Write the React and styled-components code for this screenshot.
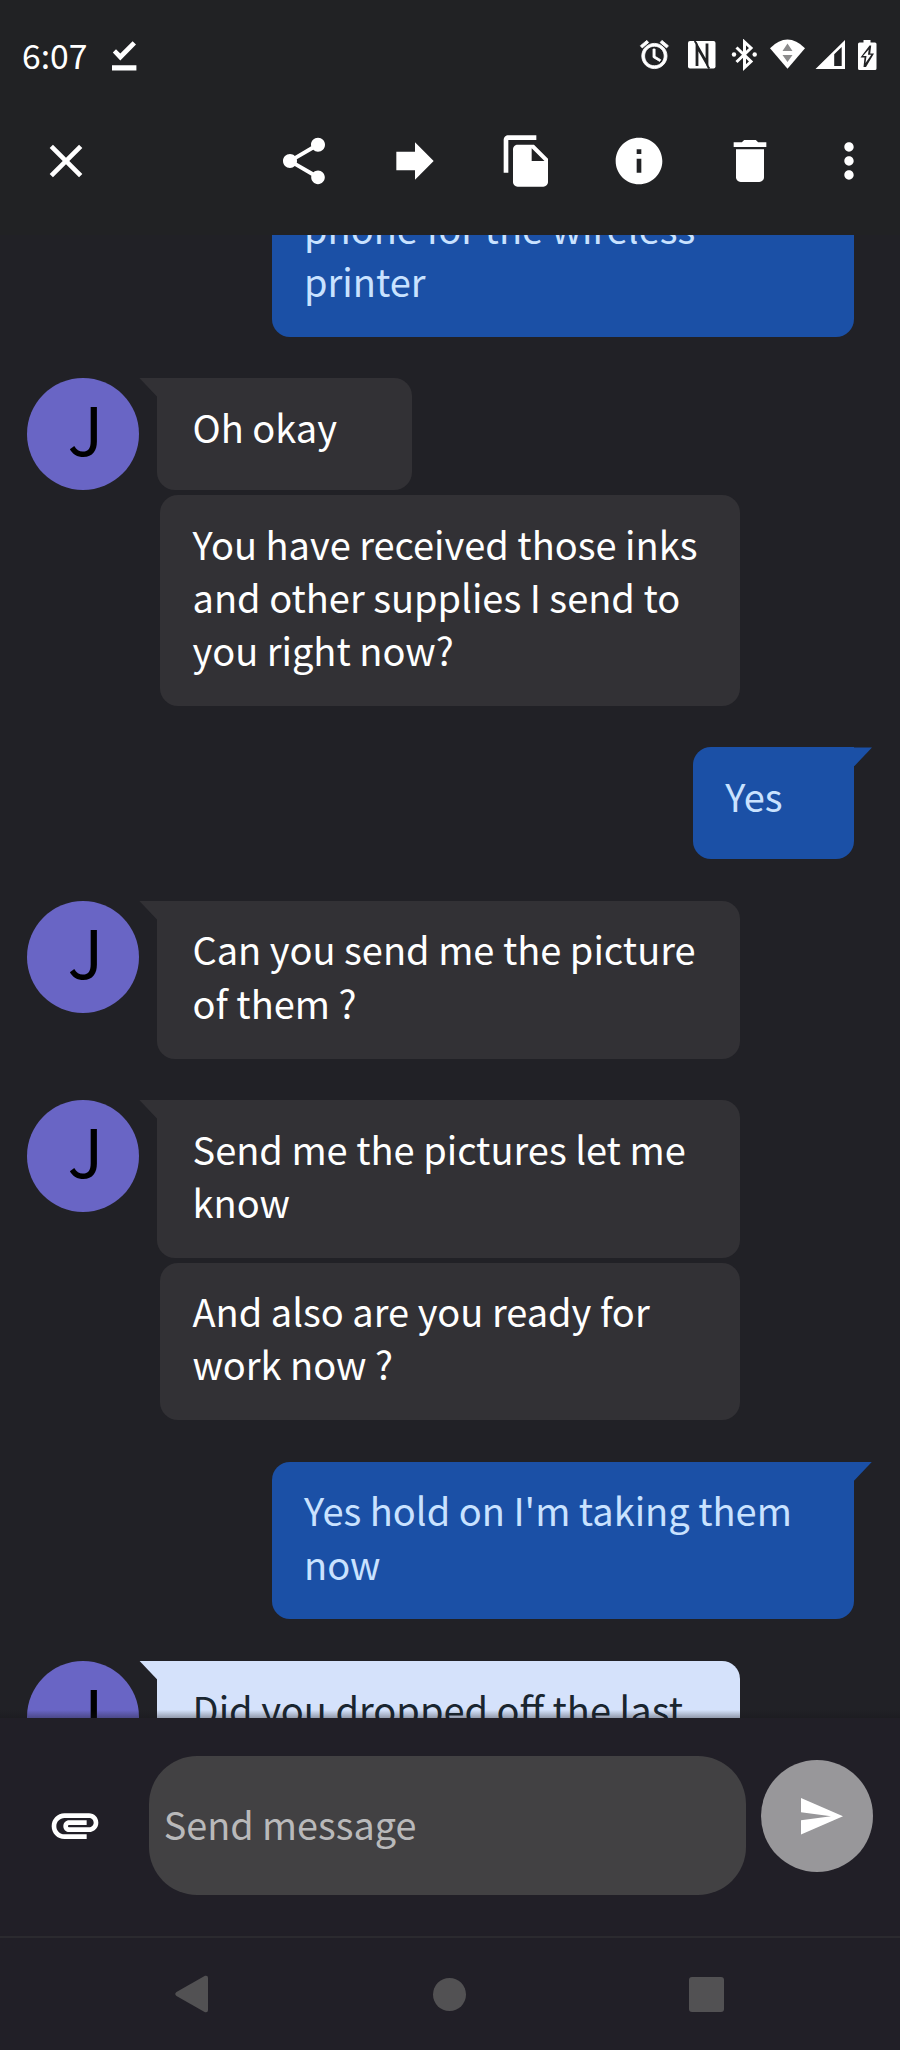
import React from "react";
import styled, { createGlobalStyle } from "styled-components";

const messages = [
    { id: 1, from: "me", bubbles: ["phone for the wireless\nprinter"] },
    { id: 2, from: "J", bubbles: ["Oh okay", "You have received those inks\nand other supplies I send to\nyou right now?"] },
    { id: 3, from: "me", bubbles: ["Yes"] },
    { id: 4, from: "J", bubbles: ["Can you send me the picture\nof them ?"] },
    { id: 5, from: "J", bubbles: ["Send me the pictures let me\nknow", "And also are you ready for\nwork now ?"] },
    { id: 6, from: "me", bubbles: ["Yes hold on I'm taking them\nnow"] },
    { id: 7, from: "J", selected: true, bubbles: ["Did you dropped off the last\n"] },
];

function Icon({ d, size = 56 }) {
    return (
        <svg width={size} height={size} viewBox="0 0 24 24" fill="currentColor">
            <path d={d} />
        </svg>
    );
}

function StatusBar() {
    return (
        <ContainerStatus>
            <Clock>6:07</Clock>
            <svg width="25" height="30" viewBox="0 0 25 30" fill="#fff">
                <path d="M0.8 11.6 4 8.2 8.3 12.4 20.6 0.2 24 3.6 8.3 19.4zM0 24.2h24.4v5.2H0z" />
            </svg>
            <StatusIcons>
                <svg width="240" height="34" viewBox="0 0 240 34" fill="#fff">
                    {/* alarm */}
                    <path
                        transform="translate(-1.4 -1.2) scale(1.4)"
                        stroke="#fff"
                        strokeWidth="0.6"
                        d="M22 5.72l-4.6-3.86-1.29 1.53 4.6 3.86L22 5.72zM7.88 3.39L6.6 1.86 2 5.71l1.29 1.53 4.59-3.85zM12.5 8H11v6l4.75 2.85.75-1.23-4-2.37V8zM12 4c-4.97 0-9 4.03-9 9s4.02 9 9 9c4.97 0 9-4.03 9-9s-4.03-9-9-9zm0 16c-3.87 0-7-3.13-7-7s3.13-7 7-7 7 3.13 7 7-3.13 7-7 7z"
                    />
                    {/* nfc */}
                    <rect x="49" y="2" width="27.5" height="27.5" rx="2" />
                    <path d="M58 27V7L68 24.500V4.500" fill="none" stroke="#212224" strokeWidth="2.800" />
                    <path d="M55.500 2Q57.500 3.500 58.500 8M70.500 29.500Q68.500 28 67.500 23.500" fill="none" stroke="#212224" strokeWidth="1.800" />
                    {/* bluetooth */}
                    <path d="M97.500 8.500l14.500 14-6.500 6V3l6.500 6-14.500 14" fill="none" stroke="#fff" strokeWidth="3" />
                    <circle cx="95" cy="15.500" r="2.200" />
                    <circle cx="115.700" cy="15.500" r="2.200" />
                    {/* wifi */}
                    <path d="M131 9.200Q148.500-8 166 9.200L148.500 29.700z" />
                    <path d="M148.500 4.500l5 7.500h-10zM143.500 16h10l-5 7z" fill="#8b8b8c" />
                    {/* signal */}
                    <path fillRule="evenodd" d="M176.500 30 206 1v29zM195.200 15.200V27h7.500V8z" />
                    {/* battery */}
                    <path fillRule="evenodd" d="M224.500 1h7v2.500h4.500a1.500 1.500 0 0 1 1.500 1.500v24.500a1.500 1.500 0 0 1-1.500 1.500h-15.500a1.500 1.500 0 0 1-1.500-1.500V5a1.500 1.500 0 0 1 1.500-1.500h4zM230.500 6.500 221.500 18.500h4l-1 9.500h2.500l8-13.500h-3.800l1-8z" />
                    <path d="M229.700 10.500 224 17h3.500l-1 7 5.800-8.200h-3.300z" />
                </svg>
            </StatusIcons>
        </ContainerStatus>
    );
}

function Toolbar() {
    return (
        <ContainerToolbar>
            <Icon d="M19 6.410L17.590 5 12 10.590 6.410 5 5 6.410 10.590 12 5 17.590 6.410 19 12 13.410 17.590 19 19 17.590 13.410 12z" />
            <Actions>
                <Icon d="M18 16.080c-.76 0-1.440.3-1.960.77L8.910 12.700c.05-.23.09-.46.09-.7s-.04-.47-.09-.7l7.050-4.110c.54.5 1.250.81 2.040.81 1.660 0 3-1.340 3-3s-1.340-3-3-3-3 1.340-3 3c0 .24.04.47.09.7L8.040 9.810C7.500 9.310 6.790 9 6 9c-1.660 0-3 1.340-3 3s1.340 3 3 3c.79 0 1.500-.31 2.040-.81l7.120 4.160c-.05.21-.08.43-.08.65 0 1.610 1.310 2.920 2.920 2.920s2.920-1.310 2.920-2.920-1.310-2.920-2.920-2.920z" />
                <Icon d="M12 8V4l8 8-8 8v-4H4V8z" />
                <Icon d="M16 1H4c-1.100 0-2 .9-2 2v14h2V3h12V1zm-1 4l6 6v10c0 1.100-.9 2-2 2H7.990C6.890 23 6 22.100 6 21l.01-14c0-1.100.89-2 1.990-2h7zm-1 7h5.500L14 6.500V12z" />
                <Icon d="M12 2C6.480 2 2 6.480 2 12s4.480 10 10 10 10-4.480 10-10S17.520 2 12 2zm1 15h-2v-6h2v6zm0-8h-2V7h2v2z" />
                <Icon d="M6 19c0 1.100.9 2 2 2h8c1.100 0 2-.9 2-2V7H6v12zM19 4h-3.500l-1-1h-5l-1 1H5v2h14V4z" />
            </Actions>
            <Icon d="M12 8c1.100 0 2-.9 2-2s-.9-2-2-2-2 .9-2 2 .9 2 2 2zm0 2c-1.100 0-2 .9-2 2s.9 2 2 2 2-.9 2-2-.9-2-2-2zm0 6c-1.100 0-2 .9-2 2s.9 2 2 2 2-.9 2-2-.9-2-2-2z" />
        </ContainerToolbar>
    );
}

function Group({ from, bubbles, selected }) {
    const mine = from === "me";
    return (
        <Row $mine={mine}>
            {!mine && <Avatar>{from}</Avatar>}
            <Bubbles $mine={mine}>
                {bubbles.map((text, i) => (
                    <Bubble
                        key={i}
                        $mine={mine}
                        $selected={selected}
                        $tail={i === 0}
                        $wide={text.includes("\n")}
                    >
                        {text}
                    </Bubble>
                ))}
            </Bubbles>
        </Row>
    );
}

function Compose() {
    return (
        <ContainerCompose>
            <Attach>
                <Icon d="M2 12.500C2 9.460 4.460 7 7.500 7H18c2.210 0 4 1.790 4 4s-1.790 4-4 4H9.500C8.120 15 7 13.880 7 12.500S8.120 10 9.500 10H17v2H9.410c-.55 0-.55 1 0 1H18c1.100 0 2-.9 2-2s-.9-2-2-2H7.500C5.570 9 4 10.570 4 12.500S5.570 16 7.500 16H17v2H7.500C4.460 18 2 15.540 2 12.500z" />
            </Attach>
            <Field>Send message</Field>
            <SendButton>
                <svg width="42" height="37" viewBox="0 0 42 37" fill="#fff">
                    <path d="M0 0 42 18.300 0 36.500V22.200L30 18.300 0 14.200z" />
                </svg>
            </SendButton>
        </ContainerCompose>
    );
}

function NavBar() {
    return (
        <ContainerNav>
            <svg width="34" height="38" viewBox="0 0 34 38" fill="#525153">
                <path d="M1.500 17 30 .8Q33 0 33 3v32q0 3-3 2.200L1.500 21Q-1 19 1.500 17z" />
            </svg>
            <Home />
            <Recents />
        </ContainerNav>
    );
}

export default function App() {
    return (
        <>
            <GlobalStyle />
            <Screen>
                <StatusBar />
                <Toolbar />
                <Chat>
                    {messages.map((m) => (
                        <Group key={m.id} {...m} />
                    ))}
                </Chat>
                <Compose />
                <NavBar />
            </Screen>
        </>
    );
}

const GlobalStyle = createGlobalStyle`
    * {
        box-sizing: border-box;
    }

    body {
        margin: 0;
        background: #212126;
        font-family: 'Noto Sans CJK SC', 'Noto Sans', sans-serif;
    }

    svg {
        display: block;
        flex-shrink: 0;
    }
`

const Screen = styled.div`
    width: 900px;
    height: 2050px;
    display: flex;
    flex-direction: column;
    overflow: hidden;
    background: #212126;
    color: #fff;
`

const ContainerStatus = styled.div`
    height: 112px;
    padding: 0 21px 0 22px;
    display: flex;
    align-items: center;
    background: #212224;
`

const Clock = styled.span`
    width: 90px;
    margin-top: -3px;
    font-size: 33.700px;
    line-height: 40px;
`

const StatusIcons = styled.div`
    margin-left: auto;
`

const ContainerToolbar = styled.div`
    height: 123px;
    padding: 21px 23.300px 46px 37.600px;
    display: flex;
    justify-content: space-between;
    background: #212224;
`

const Actions = styled.div`
    display: flex;
    gap: 55.700px;
    margin-left: auto;
    margin-right: 42.400px;
`

const Chat = styled.div`
    position: relative;
    height: 1483px;
    flex-shrink: 0;
    overflow: hidden;
    display: flex;
    flex-direction: column;
    gap: 41.500px;

    /* shadow of the compose bar over the last message */
    &::after {
        content: "";
        position: absolute;
        left: 0;
        right: 0;
        bottom: 0;
        height: 8px;
        background: linear-gradient(rgba(20, 20, 24, 0), rgba(20, 20, 24, 0.35));
    }
`

const Row = styled.div`
    display: flex;
    flex-shrink: 0;
    padding: 0 46px 0 27.400px;
    justify-content: ${(p) => (p.$mine ? "flex-end" : "flex-start")};

    &:first-child {
        margin-top: -56px;
    }
`

const Avatar = styled.div`
    width: 112px;
    height: 112px;
    flex-shrink: 0;
    margin-right: 18px;
    padding-left: 4px;
    border-radius: 50%;
    background: #6965c5;
    color: #000;
    font-size: 67px;
    line-height: 98px;
    text-align: center;
`

const Bubbles = styled.div`
    display: flex;
    flex-direction: column;
    gap: 5px;
    align-items: ${(p) => (p.$mine ? "flex-end" : "flex-start")};
`

const Bubble = styled.div`
    position: relative;
    width: ${(p) => (!p.$wide ? "auto" : p.$mine ? "582px" : p.$tail ? "582.6px" : "580px")};
    min-height: 112px;
    margin-left: ${(p) => (p.$mine || p.$tail ? 0 : 2.6)}px;
    padding: 21.500px ${(p) => (p.$wide ? 0 : p.$mine ? 71.5 : 74.5)}px 29.500px ${(p) => (p.$mine ? 32 : p.$tail ? 35.1 : 32.5)}px;
    border-radius: 18px;
    font-size: 38px;
    line-height: 53.300px;
    white-space: pre;
    background: ${(p) => (p.$selected ? "#d5e2fb" : p.$mine ? "#1b50a6" : "#323135")};
    color: ${(p) => (p.$selected ? "#1a2630" : p.$mine ? "#c9e2ff" : "#fff")};
    ${(p) => p.$tail && (p.$mine ? "border-top-right-radius: 0;" : "border-top-left-radius: 0;")}

    &::before {
        content: "";
        display: ${(p) => (p.$tail ? "block" : "none")};
        position: absolute;
        top: 0;
        width: 18px;
        height: 19px;
        background: inherit;
        ${(p) => (p.$mine
            ? "left: 100%; clip-path: polygon(0 0, 100% 0, 0 100%);"
            : "right: 100%; clip-path: polygon(0 0, 100% 0, 100% 100%);")}
    }
`

const ContainerCompose = styled.div`
    height: 220px;
    flex-shrink: 0;
    padding: 38px 27px 0 0;
    display: flex;
    background: #211f27;
    border-bottom: 2px solid #2b2a2f;
`

const Attach = styled.div`
    width: 149.400px;
    padding: 41px 0 0 46.700px;
`

const Field = styled.div`
    width: 597px;
    height: 138.500px;
    padding: 0 0 3px 14.300px;
    display: flex;
    align-items: center;
    border-radius: 48px;
    background: #424143;
    color: #b9b9ba;
    font-size: 37.800px;
`

const SendButton = styled.div`
    width: 112px;
    height: 112px;
    margin: 4px 0 0 auto;
    padding-left: 9px;
    display: flex;
    align-items: center;
    justify-content: center;
    border-radius: 50%;
    background: #98979a;
`

const ContainerNav = styled.div`
    height: 112px;
    padding: 0 176px 0 175px;
    display: flex;
    align-items: center;
    justify-content: space-between;
    background: #211f27;
`

const Home = styled.div`
    width: 33px;
    height: 33px;
    border-radius: 50%;
    background: #525153;
`

const Recents = styled.div`
    width: 35px;
    height: 35px;
    border-radius: 3px;
    background: #525153;
`
